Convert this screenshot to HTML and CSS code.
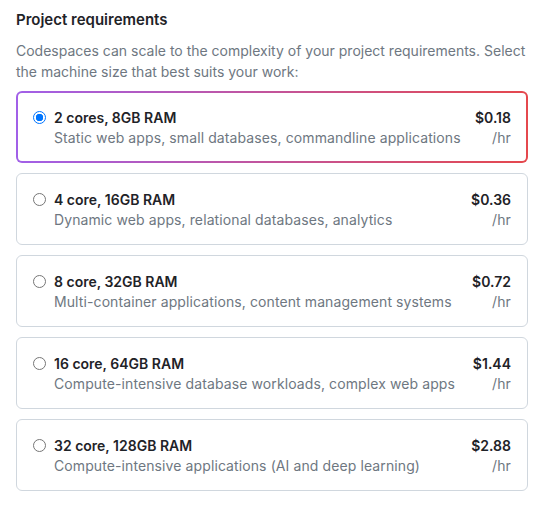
FILE: index.html
```html
<!DOCTYPE html>
<html>
<head>
<meta charset="utf-8">
<link rel="stylesheet" href="styles.css">
</head>
<body>
<div class="wrap">
  <h2 class="title">Project requirements</h2>
  <p class="desc">Codespaces can scale to the complexity of your project requirements. Select the machine size that best suits your work:</p>
  <div class="list">
    <label class="card selected">
      <span class="radio on"></span>
      <span class="info"><span class="name">2 cores, 8GB RAM</span><span class="sub">Static web apps, small databases, commandline applications</span></span>
      <span class="price"><span class="amt">$0.18</span><span class="unit">/hr</span></span>
    </label>
    <label class="card">
      <span class="radio"></span>
      <span class="info"><span class="name">4 core, 16GB RAM</span><span class="sub">Dynamic web apps, relational databases, analytics</span></span>
      <span class="price"><span class="amt">$0.36</span><span class="unit">/hr</span></span>
    </label>
    <label class="card">
      <span class="radio"></span>
      <span class="info"><span class="name">8 core, 32GB RAM</span><span class="sub">Multi-container applications, content management systems</span></span>
      <span class="price"><span class="amt">$0.72</span><span class="unit">/hr</span></span>
    </label>
    <label class="card">
      <span class="radio"></span>
      <span class="info"><span class="name">16 core, 64GB RAM</span><span class="sub">Compute-intensive database workloads, complex web apps</span></span>
      <span class="price"><span class="amt">$1.44</span><span class="unit">/hr</span></span>
    </label>
    <label class="card">
      <span class="radio"></span>
      <span class="info"><span class="name">32 core, 128GB RAM</span><span class="sub">Compute-intensive applications (AI and deep learning)</span></span>
      <span class="price"><span class="amt">$2.88</span><span class="unit">/hr</span></span>
    </label>
  </div>
</div>
</body>
</html>
```

FILE: styles.css
```css
* { box-sizing: border-box; }
body {
  margin: 0;
  background: #ffffff;
  font-family: "Inter", "Noto Sans", sans-serif;
  color: #1f2328;
}
.wrap {
  padding: 10px 18px 16px 16px;
}
.title {
  margin: 0;
  font-size: 15px;
  font-weight: 600;
  line-height: 20px;
  color: #1f2328;
}
.desc {
  margin: 10px -6px 9px 0;
  font-size: 14px;
  line-height: 21px;
  color: #6e7781;
}
.list {
  display: flex;
  flex-direction: column;
  gap: 10px;
}
.card {
  display: flex;
  align-items: flex-start;
  height: 72px;
  padding: 16px 16px 0 16px;
  border: 1px solid #d0d7de;
  border-radius: 6px;
  background: #fff;
}
.card.selected {
  border: 2px solid transparent;
  padding: 15px 15px 0 15px;
  background:
    linear-gradient(#fff, #fff) padding-box,
    linear-gradient(90deg, #a160e8, #e5484d) border-box;
}
.radio {
  flex: none;
  width: 13px;
  height: 13px;
  margin: 3px 8px 0 0;
  border: 1px solid #767676;
  border-radius: 50%;
  background: #fff;
}
.radio.on {
  border: 1px solid #0075ff;
  background: radial-gradient(circle, #0075ff 0 3.5px, #fff 4px);
}
.info {
  flex: 1;
  display: flex;
  flex-direction: column;
}
.name {
  font-size: 14px;
  font-weight: 600;
  line-height: 20px;
}
.sub, .unit {
  font-size: 14px;
  line-height: 20px;
  color: #6e7781;
  letter-spacing: 0.1px;
}
.price {
  display: flex;
  flex-direction: column;
  align-items: flex-end;
}
.amt {
  font-size: 14px;
  font-weight: 600;
  line-height: 20px;
}
```
